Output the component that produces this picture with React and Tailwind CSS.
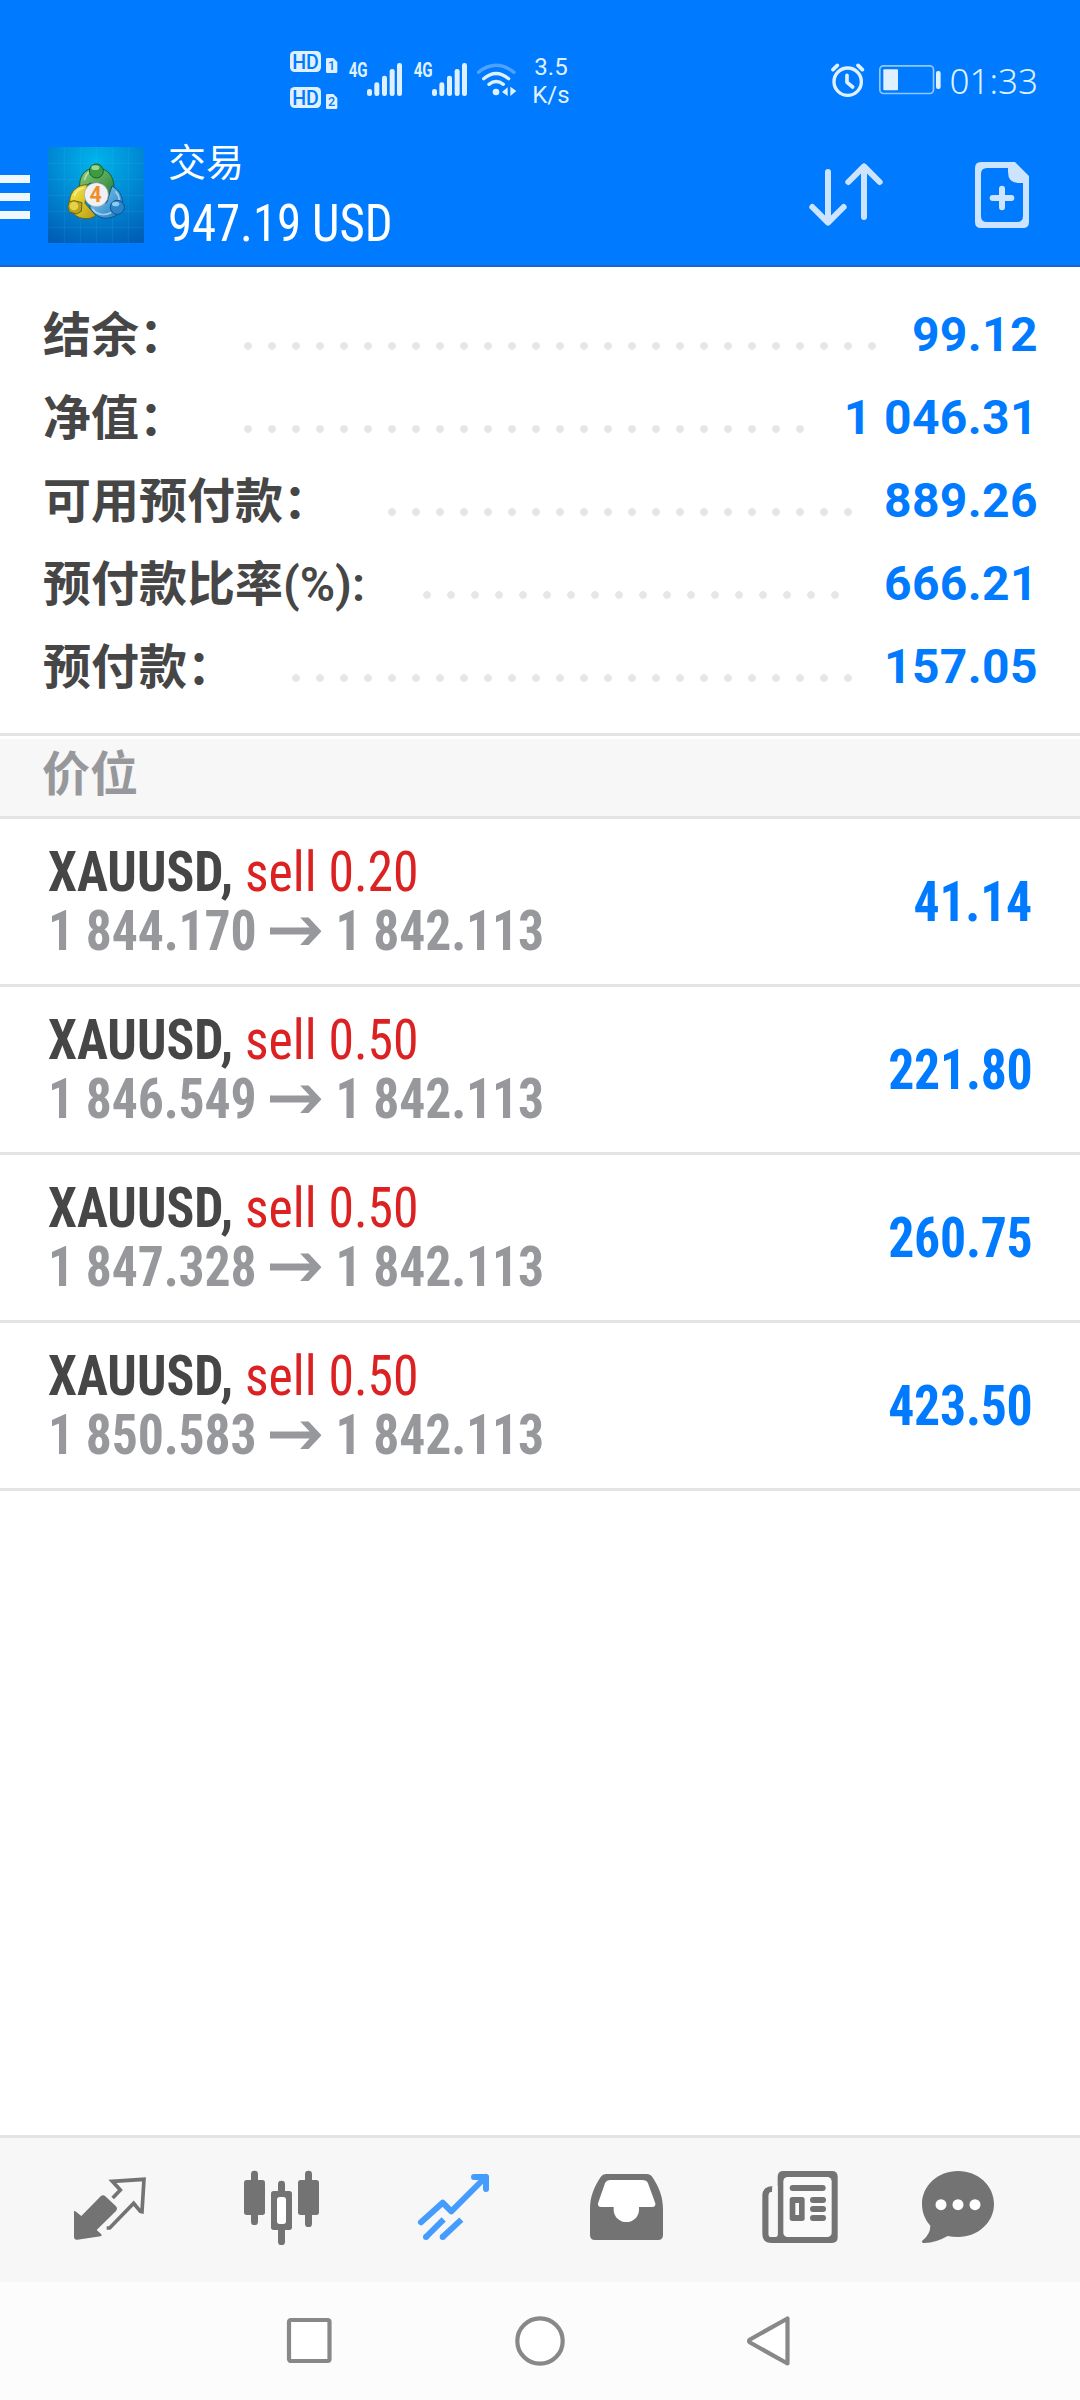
import clsx from 'clsx';

const summary = [
  { label: '结余：', value: '99.12', dots: 27 },
  { label: '净值：', value: '1 046.31', dots: 24 },
  { label: '可用预付款：', value: '889.26', dots: 20 },
  { label: '预付款比率', suffix: '(%):', value: '666.21', dots: 18 },
  { label: '预付款：', value: '157.05', dots: 24 },
];

const positions = [
  { id: 1, symbol: 'XAUUSD', side: 'sell 0.20', open: '1 844.170', current: '1 842.113', profit: '41.14' },
  { id: 2, symbol: 'XAUUSD', side: 'sell 0.50', open: '1 846.549', current: '1 842.113', profit: '221.80' },
  { id: 3, symbol: 'XAUUSD', side: 'sell 0.50', open: '1 847.328', current: '1 842.113', profit: '260.75' },
  { id: 4, symbol: 'XAUUSD', side: 'sell 0.50', open: '1 850.583', current: '1 842.113', profit: '423.50' },
];

// Roboto's width axis stops at 75%, so the narrow face is tightened a bit more
const condensed = "font-['Roboto_Condensed','Roboto',sans-serif] [font-stretch:75%] scale-x-[0.94]";

const HdBadges = () => (
  <svg className="h-[60px] w-[57px]" viewBox="60 60 171 180" fill="#dff1ff">
    {[0, 108].map((dy, i) => (
      <g key={dy} transform={`translate(0 ${dy})`}>
        <rect x="60" y="63" width="93" height="63" rx="14" />
        <text
          x="106.5"
          y="116"
          textAnchor="middle"
          textLength="80"
          lengthAdjust="spacingAndGlyphs"
          fill="#007aff"
          className="font-['Roboto',sans-serif] text-[60px] font-medium"
        >
          HD
        </text>
        <path d="M172 84h18l12 12v29q0 4-4 4h-26q-4 0-4-4V88q0-4 4-4z" />
        <text
          x="184.500"
          y="121"
          textAnchor="middle"
          fill="#007aff"
          className="font-['Roboto',sans-serif] text-[38px] font-medium"
        >
          {i + 1}
        </text>
      </g>
    ))}
  </svg>
);

const Signal = () => (
  <svg className="h-[60px] w-[65px]" viewBox="231 60 195 180" fill="#dff1ff">
    <text
      x="236"
      y="142"
      textLength="57"
      lengthAdjust="spacingAndGlyphs"
      className="font-['Roboto',sans-serif] text-[59px] font-bold"
    >
      4G
    </text>
    <rect x="291" y="177" width="15" height="21" rx="7" />
    <rect x="313" y="157" width="15" height="41" rx="7" />
    <rect x="336" y="137" width="15" height="61" rx="7" />
    <rect x="359" y="117" width="15" height="81" rx="7" />
    <rect x="381" y="99" width="15" height="99" rx="7" />
  </svg>
);

const Wifi = () => (
  <svg className="h-[60px] w-10" viewBox="621 60 120 180" fill="none" stroke="#dff1ff" strokeWidth="10" strokeLinecap="round">
    <path d="M625 127q53-42 107 0" opacity=".35" />
    <path d="M641 146q37-31 75 0M657 163q21-17 43 0" />
    <circle cx="678" cy="186" r="10" fill="#dff1ff" stroke="none" />
    <path d="M713 172v26l-17-12zM721 170v28l18-15z" fill="#dff1ff" stroke="none" />
  </svg>
);

const AlarmIcon = () => (
  <svg className="h-[34px] w-[34px]" viewBox="90 67 102 102" fill="none" stroke="#dff1ff" strokeWidth="10" strokeLinecap="round">
    <circle cx="140" cy="123" r="41" />
    <path d="M96 87l13-13M184 87l-13-13" strokeWidth="11" />
    <path d="M138 104v21l17 14" strokeWidth="11" strokeLinejoin="round" />
  </svg>
);

const BatteryIcon = () => (
  <svg className="h-[30px] w-[63px]" viewBox="234 74 189 90" fill="#dff1ff">
    <rect x="236.500" y="76.500" width="161" height="83" rx="11" fill="none" stroke="#8fc7ff" strokeWidth="5" />
    <rect x="247" y="87" width="44" height="63" rx="3" />
    <rect x="405" y="92" width="14" height="54" rx="6" />
  </svg>
);

const StatusBar = () => (
  <div className="flex h-[130px] items-start justify-between pr-[42px] pl-[290px] pt-[50px]">
    <div className="flex h-[60px]">
      <HdBadges />
      <Signal />
      <Signal />
      <Wifi />
      <div className="ml-[14px] w-10 pt-[3px] text-center font-['Roboto',sans-serif] text-[24px] leading-7 text-[#dff1ff]">
        <div>3.5</div>
        <div>K/s</div>
      </div>
    </div>
    <div className="flex h-[60px] items-center">
      <AlarmIcon />
      <span className="ml-[14px] flex">
        <BatteryIcon />
      </span>
      <span className="ml-2 pt-[2px] font-['Noto_Sans',sans-serif] text-[35px] font-light text-[#dff1ff]">01:33</span>
    </div>
  </div>
);

const Logo = () => (
  <svg className="h-24 w-24" viewBox="144 51 288 288">
    <defs>
      <radialGradient id="logoBg" cx=".5" cy=".15" r=".95">
        <stop offset="0" stopColor="#00b4ea" />
        <stop offset=".5" stopColor="#0088d4" />
        <stop offset="1" stopColor="#005cb4" />
      </radialGradient>
      <linearGradient id="logoGreen" x2="1" y2="1">
        <stop offset="0" stopColor="#8fd07a" />
        <stop offset="1" stopColor="#1d7a35" />
      </linearGradient>
      <linearGradient id="logoYellow" x2="1" y2="1">
        <stop offset="0" stopColor="#fff04a" />
        <stop offset="1" stopColor="#b49a10" />
      </linearGradient>
      <linearGradient id="logoBlue" x2="1" y2="1">
        <stop offset="0" stopColor="#8fd4f8" />
        <stop offset="1" stopColor="#1b78bd" />
      </linearGradient>
    </defs>
    <rect x="144" y="51" width="288" height="288" fill="url(#logoBg)" />
    <path
      d="M193 51v288M241 51v288M289 51v288M337 51v288M385 51v288M144 100h288M144 148h288M144 196h288M144 244h288M144 292h288"
      stroke="#5cc8f0"
      strokeOpacity=".2"
      strokeWidth="2"
    />
    <path d="M240 178c-6-36 12-64 49-64s59 30 51 74l-20 22-16-50h-34z" fill="url(#logoGreen)" stroke="#17602c" strokeWidth="3" />
    <path d="M262 164c-30 0-52 20-53 50 0 34 20 52 50 52 12 0 22-4 28-10l-32-36z" fill="url(#logoYellow)" stroke="#6f6410" strokeWidth="3" />
    <path d="M336 168c26 14 36 38 30 64-6 24-32 36-56 32-20-4-36-18-42-36l52-10z" fill="url(#logoBlue)" stroke="#12528c" strokeWidth="3" />
    <path d="M254 148c4-18 16-26 30-27M224 196c4-12 14-20 26-22M348 186c10 12 12 28 6 42M278 238c12 16 36 20 54 10" fill="none" stroke="#fff" strokeOpacity=".5" strokeWidth="5" strokeLinecap="round" />
    <circle cx="289" cy="123" r="21" fill="#3f9b42" stroke="#17602c" strokeWidth="3" />
    <ellipse cx="286" cy="113" rx="12" ry="7" fill="#b9e6a0" opacity=".8" />
    <path d="M206 216l16-4 24 6-2 26-14 8-22-6-4-16z" fill="#b8a31c" stroke="#6f6410" strokeWidth="3" strokeLinejoin="round" />
    <circle cx="222" cy="228" r="13" fill="#e6d24a" />
    <circle cx="352" cy="232" r="21" fill="#2a86c8" stroke="#12528c" strokeWidth="3" />
    <ellipse cx="347" cy="222" rx="11" ry="7" fill="#a9dcf8" opacity=".8" />
    <circle cx="289" cy="194" r="36" fill="#f1f1f3" stroke="#9a9fa8" strokeWidth="2" />
    <text x="287" y="217" textAnchor="middle" fill="#f28c28" className="font-['Roboto',sans-serif] text-[64px] font-bold">
      4
    </text>
  </svg>
);

const SortIcon = () => (
  <svg className="h-[66px] w-[76px]" viewBox="84 96 228 198" fill="none" stroke="#cce4ff" strokeWidth="18" strokeLinecap="round" strokeLinejoin="round">
    <path d="M144 126v150M97 231l47 47 47-47" />
    <path d="M252 261V112M205 156l47-47 47 47" />
  </svg>
);

const NewOrderIcon = () => (
  <svg className="h-[66px] w-[54px]" viewBox="585 96 162 198">
    <path
      d="M603 96h102l42 42v138q0 18-18 18H603q-18 0-18-18V114q0-18 18-18zM621 114q-18 0-18 18v126q0 18 18 18h90q18 0 18-18V159h-12q-33 0-33-33v-12z"
      fill="#cce4ff"
      fillRule="evenodd"
    />
    <path d="M666 176v56M638 204h56" stroke="#cce4ff" strokeWidth="18" strokeLinecap="round" />
  </svg>
);

const Header = () => (
  <header className="flex h-[137px] items-start border-b-2 border-[#1767c8] pr-[51px]">
    <div className="flex h-[134px] flex-col pt-[45px]">
      <div className="flex w-[30px] flex-col gap-[10px]">
        <div className="h-2 bg-[#f0f8ff]" />
        <div className="h-2 bg-[#f0f8ff]" />
        <div className="h-2 bg-[#f0f8ff]" />
      </div>
    </div>
    <div className="ml-[18px] pt-[17px]">
      <Logo />
    </div>
    <div className="ml-6 text-white">
      <div className="pt-1 font-['Noto_Sans_CJK_SC',sans-serif] text-[38px] leading-[52px]">交易</div>
      <div className={clsx(condensed, 'origin-left pt-1 text-[52px] leading-[68px] font-[450] tracking-[-0.1px] whitespace-nowrap')}>
        947.19 USD
      </div>
    </div>
    <div className="ml-auto flex pt-8">
      <SortIcon />
      <span className="ml-[91px]">
        <NewOrderIcon />
      </span>
    </div>
  </header>
);

const SummaryRow = ({ label, suffix, value, dots }) => (
  <div className="flex h-[83px] items-center">
    <div className="-mt-[6px] h-[83px] font-['Noto_Sans_CJK_SC',sans-serif] text-[48px] leading-[83px] font-bold whitespace-nowrap text-[#464646]">
      {label}
      {suffix && (
        <span className="inline-block w-[83px] font-['Roboto',sans-serif] leading-none font-semibold">{suffix}</span>
      )}
    </div>
    <div
      className="mt-[22px] ml-[57px] h-2 bg-[radial-gradient(circle_at_4px_4px,#e6e6e6_3.5px,transparent_4.2px)] bg-[length:24px_8px]"
      style={{ width: dots * 24 }}
    />
    <div className="ml-auto font-['Roboto',sans-serif] text-[48px] font-bold tracking-[0.4px] whitespace-nowrap text-[#007aff]">
      {value}
    </div>
  </div>
);

const PositionRow = ({ symbol, side, open, current, profit }) => (
  <div className="flex h-[168px] items-center justify-between border-b-[3px] border-[#e4e4e4] pr-[48px] pl-[48px]">
    <div className={clsx(condensed, 'origin-left text-[55px] leading-[59px] whitespace-nowrap')}>
      <div>
        <span className="font-bold text-[#464646]">{symbol},</span>{' '}
        <span className="font-[450] text-[#db2121]">{side}</span>
      </div>
      <div className="flex items-center font-bold tracking-[-0.15px] text-[#97989c]">
        {open}
        <svg className="mx-[14.500px] h-7 w-[55px]" viewBox="0 0 52 28" preserveAspectRatio="none" fill="currentColor">
          <path d="M0 10.500h40L30.500.5h8.500L52 14.200 39 28h-8.500L40 17.500H0z" />
        </svg>
        {current}
      </div>
    </div>
    <div className={clsx(condensed, 'origin-right pt-[2px] text-[55px] font-bold tracking-[-0.25px] text-[#007aff]')}>
      {profit}
    </div>
  </div>
);

const QuotesIcon = () => (
  <svg className="h-[84px] w-[84px] overflow-visible" viewBox="84 174 252 252" fill="#737373">
    <path d="M102 304q2-3 6 1l16 13 58-59q7-7 14 0l32 30q6 7 0 14l-58 57 14 13q3 5-2 6l-70 10q-10 1-10-9z" />
    <path d="M218 264l23-24-24-26 95-6-6 97-5-1-20-24-72 74h-9" fill="none" stroke="#737373" strokeWidth="11" />
  </svg>
);

const ChartIcon = () => (
  <svg className="h-[84px] w-[84px]" viewBox="600 174 252 252" fill="#737373">
    <rect x="633" y="182" width="21" height="163" rx="10" />
    <rect x="612" y="210" width="63" height="105" rx="8" />
    <rect x="795" y="182" width="21" height="169" rx="10" />
    <rect x="774" y="210" width="63" height="105" rx="8" />
    <rect x="714" y="212" width="21" height="60" rx="10" />
    <rect x="714" y="340" width="21" height="65" rx="10" />
    <rect x="693" y="243" width="63" height="117" rx="8" />
    <rect x="711" y="261" width="27" height="81" rx="8" fill="#fff" />
  </svg>
);

const TradeIcon = () => (
  <svg className="h-[84px] w-[84px]" viewBox="1116 174 252 252" fill="none" stroke="#459cff" strokeWidth="18" strokeLinejoin="round">
    <path d="M1143 337l65-59 26 26 103-103" strokeLinecap="round" />
    <path d="M1302 201h36v36" strokeLinecap="round" />
    <path d="M1211 328l-53 53M1264 329l-56 52" />
    <circle cx="1158" cy="381" r="9" fill="#459cff" stroke="none" />
    <circle cx="1208" cy="381" r="9" fill="#459cff" stroke="none" />
  </svg>
);

const InboxIcon = () => (
  <svg className="h-[84px] w-[84px]" viewBox="132 174 252 252">
    <path
      d="M198 192h122q11 0 17 9c20 30 32 60 32 94v80q0 15-15 15H165q-15 0-15-15v-80c0-34 12-64 32-94q6-9 16-9z"
      fill="#737373"
    />
    <path d="M212 210h94q14 0 18 10l22 60q2 11-10 11h-39v8a38 37 0 0 1-76 0v-8h-37q-12 0-10-11l21-60q5-10 17-10z" fill="#fff" />
  </svg>
);

const NewsIcon = () => (
  <svg className="h-[84px] w-[84px]" viewBox="648 174 252 252" fill="#737373">
    <path d="M699 228l-2 18q-11-1-11 12v116q0 7 8 7h14q5 0 5-8V200q0-17 17-17h146q17 0 17 17v182q0 17-17 17H695q-28 0-28-28V258q0-30 32-30z" />
    <path d="M697 228h16v145q0 8-6 8h-15q-6 0-6-8V256q0-10 10-10z" fill="#f7f7f7" />
    <rect x="730" y="201" width="145" height="180" rx="13" fill="#fafafa" />
    <rect x="749" y="225" width="108" height="18" rx="9" />
    <rect x="749" y="261" width="45" height="72" rx="8" />
    <rect x="766" y="279" width="11" height="36" fill="#fafafa" />
    <rect x="810" y="261" width="48" height="18" rx="9" />
    <rect x="810" y="288" width="48" height="18" rx="9" />
    <rect x="810" y="315" width="48" height="18" rx="9" />
  </svg>
);

const ChatIcon = () => (
  <svg className="h-[84px] w-[84px] overflow-visible" viewBox="1164 174 252 252" fill="#737373">
    <path d="M1254 183c60 0 108 44 108 99s-48 99-108 99q-17 0-31-3-34 20-70 21c-8 0-9-6-3-10q21-18 21-42c-16-18-25-40-25-65 0-55 48-99 108-99z" />
    <circle cx="1203" cy="284" r="16.500" fill="#fff" />
    <circle cx="1254" cy="284" r="16.500" fill="#fff" />
    <circle cx="1305" cy="284" r="16.500" fill="#fff" />
  </svg>
);

const tabs = [
  { id: 'quotes', Icon: QuotesIcon },
  { id: 'chart', Icon: ChartIcon },
  { id: 'trade', Icon: TradeIcon },
  { id: 'history', Icon: InboxIcon },
  { id: 'news', Icon: NewsIcon },
  { id: 'chat', Icon: ChatIcon },
];

const TabBar = () => (
  <nav className="grid h-[147px] grid-cols-6 border-t-[3px] border-[#e4e4e4] bg-[#f7f7f7] px-6 pt-[30px]">
    {tabs.map(({ id, Icon }) => (
      <div key={id} className="flex justify-center">
        <Icon />
      </div>
    ))}
  </nav>
);

const SystemNav = () => (
  <div className="flex h-[118px] items-start justify-between bg-[#fcfcfc] pt-[33px] pr-[289px] pl-[286px]">
    <svg className="h-[52px] w-[46px]" viewBox="0 0 46 52" fill="#fff" stroke="#888" strokeWidth="4.200">
      <rect x="3" y="5" width="40.500" height="41" rx="2" />
    </svg>
    <svg className="h-[52px] w-[52px]" viewBox="0 0 52 52" fill="#fff" stroke="#888" strokeWidth="4.200">
      <circle cx="27" cy="26" r="22.700" />
    </svg>
    <svg className="h-[52px] w-[45px]" viewBox="0 0 45 52" fill="#fff" stroke="#888" strokeWidth="4.200" strokeLinejoin="round">
      <path d="M41.500 3.500v45L4 27.500q-2-1.500 0-3z" />
    </svg>
  </div>
);

export default function App() {
  return (
    <div className="flex h-[2400px] w-[1080px] flex-col overflow-hidden bg-white">
      <div className="bg-[#007aff]">
        <StatusBar />
        <Header />
      </div>

      <section className="h-[469px] border-b-[3px] border-[#e4e4e4] pt-[26px] pr-[42px] pl-[43px]">
        {summary.map((row) => (
          <SummaryRow key={row.label} {...row} />
        ))}
      </section>

      <div className="mt-[3px] h-20 border-b-[3px] border-[#e4e4e4] bg-[#f7f7f7] pl-[42px] font-['Noto_Sans_CJK_SC',sans-serif] text-[48px] leading-[62px] font-bold text-[#97989c]">
        价位
      </div>

      <main className="flex-1">
        {positions.map((p) => (
          <PositionRow key={p.id} {...p} />
        ))}
      </main>

      <TabBar />
      <SystemNav />
    </div>
  );
}
